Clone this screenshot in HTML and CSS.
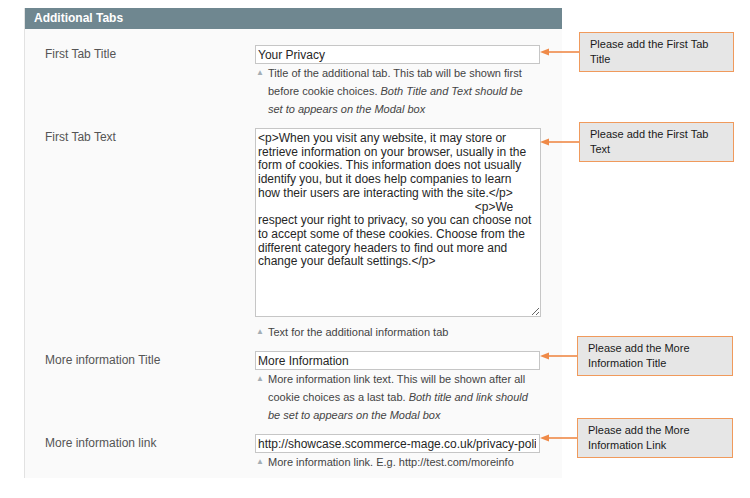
FILE: index.html
```html
<!DOCTYPE html>
<html lang="en">
<head>
<meta charset="utf-8">
<title>Additional Tabs</title>
<link rel="stylesheet" href="styles.css">
</head>
<body>
<div class="page">
  <section class="panel">
    <h2 class="panel-title">Additional Tabs</h2>
    <div class="fields">
      <div class="row">
        <label class="label">First Tab Title</label>
        <div class="control">
          <input class="input" type="text" value="Your Privacy">
          <p class="note"><span class="tri">▲</span><span class="note-text">Title of the additional tab. This tab will be shown first before cookie choices. <em>Both Title and Text should be set to appears on the Modal box</em></span></p>
        </div>
      </div>
      <div class="row">
        <label class="label">First Tab Text</label>
        <div class="control">
          <textarea class="textarea">&lt;p&gt;When you visit any website, it may store or retrieve information on your browser, usually in the form of cookies. This information does not usually identify you, but it does help companies to learn how their users are interacting with the site.&lt;/p&gt;
                                                                 &lt;p&gt;We respect your right to privacy, so you can choose not to accept some of these cookies. Choose from the different category headers to find out more and change your default settings.&lt;/p&gt;</textarea>
          <p class="note note-gap"><span class="tri">▲</span><span class="note-text">Text for the additional information tab</span></p>
        </div>
      </div>
      <div class="row">
        <label class="label">More information Title</label>
        <div class="control">
          <input class="input" type="text" value="More Information">
          <p class="note"><span class="tri">▲</span><span class="note-text">More information link text. This will be shown after all cookie choices as a last tab. <em>Both title and link should be set to appears on the Modal box</em></span></p>
        </div>
      </div>
      <div class="row">
        <label class="label">More information link</label>
        <div class="control">
          <input class="input" type="text" value="http://showcase.scommerce-mage.co.uk/privacy-policy">
          <p class="note"><span class="tri">▲</span><span class="note-text">More information link. E.g. http://test.com/moreinfo</span></p>
        </div>
      </div>
    </div>
  </section>

  <div class="callout c1">
    <svg class="arrow" width="39" height="10" viewBox="0 0 39 10"><path d="M8 5 H39" stroke="#ef8a48" stroke-width="1.6"/><path d="M0 5 L9 1.5 L9 8.5 Z" fill="#ef8a48"/></svg>
    <div class="box">Please add the First Tab Title</div>
  </div>
  <div class="callout c2">
    <svg class="arrow" width="39" height="10" viewBox="0 0 39 10"><path d="M8 5 H39" stroke="#ef8a48" stroke-width="1.6"/><path d="M0 5 L9 1.5 L9 8.5 Z" fill="#ef8a48"/></svg>
    <div class="box">Please add the First Tab Text</div>
  </div>
  <div class="callout c3">
    <svg class="arrow" width="37" height="10" viewBox="0 0 37 10"><path d="M8 5 H37" stroke="#ef8a48" stroke-width="1.6"/><path d="M0 5 L9 1.5 L9 8.5 Z" fill="#ef8a48"/></svg>
    <div class="box">Please add the More Information Title</div>
  </div>
  <div class="callout c4">
    <svg class="arrow" width="37" height="10" viewBox="0 0 37 10"><path d="M8 5 H37" stroke="#ef8a48" stroke-width="1.6"/><path d="M0 5 L9 1.5 L9 8.5 Z" fill="#ef8a48"/></svg>
    <div class="box">Please add the More Information Link</div>
  </div>
</div>
</body>
</html>
```

FILE: styles.css
```css
* { box-sizing: border-box; }

html, body {
  margin: 0;
  padding: 0;
  background: #ffffff;
  font-family: "Liberation Sans", Arial, sans-serif;
}

.page {
  position: relative;
  width: 750px;
  height: 498px;
  padding: 8px 0 0 24px;
}

.panel {
  width: 538px;
  background: #fafafa;
  border-left: 1px solid #e2e2e2;
}

.panel-title {
  margin: 0;
  height: 21px;
  line-height: 21px;
  padding-left: 9px;
  background: #6f8790;
  color: #ffffff;
  font-size: 12px;
  font-weight: bold;
}

.fields {
  padding: 16px 0 7px 20px;
  display: flex;
  flex-direction: column;
  gap: 10px;
}

.row {
  display: grid;
  grid-template-columns: 210px 286px;
}

.label {
  font-size: 12px;
  line-height: 19px;
  color: #555555;
}

.control {
  display: flex;
  flex-direction: column;
}

.input {
  display: block;
  width: 285px;
  height: 19px;
  margin: 0;
  padding: 0 3px 0 2px;
  border: 1px solid #c6c6c6;
  border-radius: 0;
  background: #ffffff;
  font-family: "Liberation Sans", Arial, sans-serif;
  font-size: 12px;
  color: #262626;
  outline: none;
}

.textarea {
  display: block;
  width: 286px;
  height: 189px;
  margin: 0;
  padding: 3px 6px 2px 2px;
  border: 1px solid #c6c6c6;
  border-radius: 0;
  background: #ffffff;
  font-family: "Liberation Sans", Arial, sans-serif;
  font-size: 12px;
  line-height: 13.7px;
  color: #262626;
  overflow: hidden;
}

.note {
  margin: 0;
  width: 280px;
  display: flex;
  font-size: 11px;
  line-height: 18px;
  color: #444444;
}

.note-gap { margin-top: 6px; }

.note em { font-style: italic; }

.tri {
  flex: 0 0 13px;
  padding-left: 1px;
  font-size: 8px;
  color: #a3aeb5;
}

.callout {
  position: absolute;
  left: 540px;
  display: flex;
  align-items: center;
}

.arrow { display: block; }

.box {
  width: 155px;
  height: 40px;
  padding: 4px 24px 0 10px;
  background: #e6e6e6;
  border: 1.5px solid #f09a5c;
  font-size: 11px;
  line-height: 15px;
  color: #1a1a1a;
}

.c1 { top: 32px; }
.c2 { top: 122px; }
.c3 { top: 336px; }
.c4 { top: 418px; }
.c3 .box, .c4 .box { width: 156px; }
```
